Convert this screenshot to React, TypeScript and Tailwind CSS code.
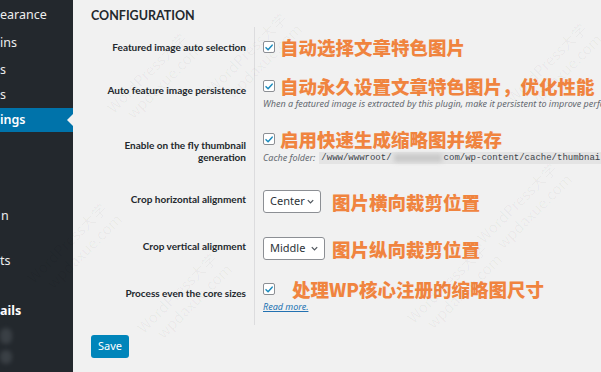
import React from 'react';

const sans = "font-['Noto_Sans','Liberation_Sans',sans-serif]";
const lato = "font-['Lato','Liberation_Sans',sans-serif]";
const cjk = "font-['Noto_Sans_CJK_SC','Noto_Sans',sans-serif]";

const sideItems = [
  { text: "earance", cls: "h-[27px] pt-[6px]" },
  { text: "ins", cls: "h-[27px] pt-[7px]" },
  { text: "s", cls: "h-[26px] pt-[7px]" },
  { text: "s", cls: "h-[26px] pt-[6px]" },
];

function Checkbox() {
  return (
    <span className="flex h-[12px] w-[12px] shrink-0 items-center justify-center rounded-[2px] border border-[#8c8f94] bg-white">
      <svg viewBox="0 0 12 12" className="h-[11px] w-[11px]">
        <path d="M2.4 6.2 L4.9 8.6 L9.8 3.2" fill="none" stroke="#1e8cbe" strokeWidth="1.8" strokeLinecap="round" strokeLinejoin="round" />
      </svg>
    </span>
  );
}

function Select({ label, width }: { label: string; width: string }) {
  return (
    <span className={`flex h-[23px] ${width} shrink-0 items-center justify-between rounded-[3px] border border-[#8c8f94] bg-white pl-[6px] pr-[5px] text-[11px] text-[#2c3338]`}>
      <span>{label}</span>
      <svg viewBox="0 0 10 10" className="h-[9px] w-[9px]">
        <path d="M2 3.5 L5 6.5 L8 3.5" fill="none" stroke="#50575e" strokeWidth="1.4" />
      </svg>
    </span>
  );
}

function Note({ children, className = "" }: { children: React.ReactNode; className?: string }) {
  return <span className={`${cjk} whitespace-nowrap text-[18.5px] leading-[22px] font-black text-[#f0843f] ${className}`}>{children}</span>;
}

function Row({ h, lpt, vpt, label, children }: { h: string; lpt: string; vpt: string; label: React.ReactNode; children: React.ReactNode }) {
  return (
    <div className={`flex ${h}`}>
      <div className={`w-[164px] shrink-0 border-r border-[#dcdcde] pr-[8px] text-right ${lato} text-[10px] leading-[12px] font-bold text-[#23282d] ${lpt}`}>{label}</div>
      <div className={`min-w-0 flex-1 pl-[8px] ${vpt}`}>{children}</div>
    </div>
  );
}

export default function App() {
  return (
    <div className={`relative flex h-[372px] w-[601px] overflow-hidden bg-[#f1f1f1] ${sans}`}>
      <aside className="flex w-[73px] shrink-0 flex-col bg-[#23282d] pt-[2px] text-[12.5px] leading-[14px] text-[#eeeeee]">
        {sideItems.map((it, i) => (
          <div key={i} className={it.cls}>{it.text}</div>
        ))}
        <div className="relative flex h-[24px] items-center bg-[#0073aa] font-semibold text-white">
          ings
          <span className="absolute right-0 top-1/2 h-0 w-0 -translate-y-1/2 border-y-[6px] border-r-[6px] border-y-transparent border-r-[#f1f1f1]" />
        </div>
        <div className="h-[77px]" />
        <div className="h-[45px] pl-[1px]">n</div>
        <div className="h-[50px]">ts</div>
        <div className="h-[20px] font-bold text-white">ails</div>
        <div className="mt-[4px] h-[16px] w-[12px] rounded-full bg-[#4a5056] opacity-60 blur-[2px]" />
        <div className="mt-[6px] h-[14px] w-[12px] rounded-full bg-[#4a5056] opacity-60 blur-[2px]" />
      </aside>

      <main className="min-w-0 flex-1 pl-[18px] pt-[8px]">
        <h2 className={`h-[19px] ${lato} text-[12.5px] leading-[16px] font-bold text-[#23282d]`}>CONFIGURATION</h2>
        <div className="flex flex-col">
          <Row h="h-[41px]" lpt="pt-[14px]" vpt="pt-[9px]" label="Featured image auto selection">
            <div className="flex items-center gap-[5px]">
              <Checkbox />
              <Note>自动选择文章特色图片</Note>
            </div>
          </Row>
          <Row h="h-[50px]" lpt="pt-[16px]" vpt="pt-[7px]" label="Auto feature image persistence">
            <div className="flex items-center gap-[5px]">
              <Checkbox />
              <Note>自动永久设置文章特色图片，优化性能</Note>
            </div>
            <div className="mt-[1px] whitespace-nowrap text-[9px] leading-[12px] italic text-[#646970]">
              When a featured image is extracted by this plugin, make it persistent to improve performance.
            </div>
          </Row>
          <Row h="h-[60px]" lpt="pt-[21px]" vpt="pt-[10px]" label={<>Enable on the fly thumbnail<br />generation</>}>
            <div className="flex items-center gap-[5px]">
              <Checkbox />
              <Note>启用快速生成缩略图并缓存</Note>
            </div>
            <div className="mt-[2px] flex items-center whitespace-nowrap text-[9px] leading-[12px]">
              <span className="italic text-[#646970]">Cache folder:</span>
              <code className="ml-[4px] flex items-center bg-[#e4e4e4] px-[2px] font-['Liberation_Mono',monospace] text-[9px] text-[#3c434a]">
                /www/wwwroot/
                <span className="mx-[2px] h-[8px] w-[48px] bg-[#c9c9c9] blur-[2px]" />
                com/wp-content/cache/thumbnails/
              </code>
            </div>
          </Row>
          <Row h="h-[44px]" lpt="pt-[15px]" vpt="pt-[12px]" label="Crop horizontal alignment">
            <div className="flex items-center">
              <Select label="Center" width="w-[58px]" />
              <Note className="ml-[11px]">图片横向裁剪位置</Note>
            </div>
          </Row>
          <Row h="h-[48px]" lpt="pt-[18px]" vpt="pt-[15px]" label="Crop vertical alignment">
            <div className="flex items-center">
              <Select label="Middle" width="w-[62px]" />
              <Note className="ml-[7px]">图片纵向裁剪位置</Note>
            </div>
          </Row>
          <Row h="h-[55px]" lpt="pt-[17px]" vpt="pt-[8px]" label="Process even the core sizes">
            <div className="flex items-center gap-[17px]">
              <Checkbox />
              <Note>处理WP核心注册的缩略图尺寸</Note>
            </div>
            <a className="mt-[1px] block text-[9px] leading-[12px] italic text-[#2271b1] underline">Read more.</a>
          </Row>
        </div>
        <button className="mt-[10px] h-[23px] w-[38px] rounded-[3px] bg-[#0085ba] text-[11px] text-white">Save</button>
      </main>

      {[
        "left-[100px] top-[60px]",
        "left-[200px] top-[40px]",
        "left-[500px] top-[50px]",
        "left-[400px] top-[270px]",
        "left-[130px] top-[280px]",
        "left-[20px] top-[230px]",
        "left-[470px] top-[190px]",
      ].map((pos, i) => (
        <div key={i} className={`pointer-events-none absolute ${pos} -rotate-45 ${cjk} text-[15px] leading-[18px] text-black/[0.04]`}>
          WordPress大学<br />&nbsp;&nbsp;&nbsp;wpdaxue.com
        </div>
      ))}
    </div>
  );
}
